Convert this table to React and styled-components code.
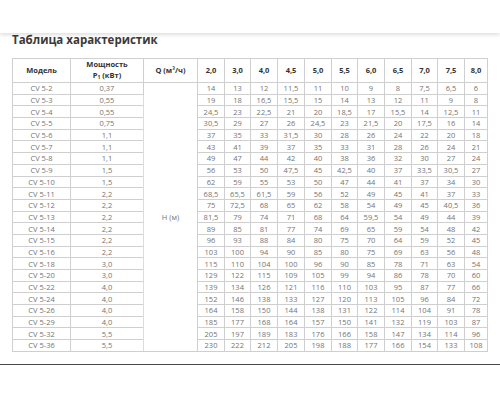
import React from "react";
import styled, { createGlobalStyle } from "styled-components";

const Global = createGlobalStyle`
  html, body { margin: 0; padding: 0; background: #fff; }
  body { font-family: "Open Sans", "Liberation Sans", sans-serif; }
`;

const Page = styled.div`
  width: 500px;
  height: 400px;
  overflow: hidden;
  background: #fff;
  display: flex;
  flex-direction: column;
`;

const TopBar = styled.header`
  height: 33px;
  flex: none;
  background: #fff;
  box-shadow: 0 2px 4px rgba(0, 0, 0, 0.13);
  position: relative;
  z-index: 1;
`;

const Content = styled.main`
  padding: 0 12px;
  flex: none;
`;

const Title = styled.h2`
  margin: 0;
  font-size: 11.5px;
  line-height: 14px;
  font-weight: 700;
  color: #3a3a3a;
`;

const Table = styled.table`
  margin-top: 11px;
  border-collapse: collapse;
  table-layout: fixed;
  width: 475px;
  font-size: 7.5px;
  color: #747474;
`;

const HeadCell = styled.th`
  border: 1px solid #cfcfcf;
  height: 22px;
  padding: 0;
  font-weight: 700;
  color: #333;
  line-height: 10.5px;
  text-align: center;
  vertical-align: middle;
`;

const Sub = styled.sub`
  font-size: 5px;
  vertical-align: -1px;
`;

const Row = styled.tr`
  height: 11.7px;
`;

const Cell = styled.td`
  border: 1px solid #cfcfcf;
  padding: 0;
  line-height: 10px;
  text-align: center;
  vertical-align: middle;
  white-space: nowrap;
`;

const SpanCell = styled(Cell)`
  border-left-color: #dcdcdc;
`;

const Footer = styled.footer`
  margin-top: 12px;
  border-top: 1.5px solid #4a4a4a;
  flex: none;
`;

const flows = ["2,0", "3,0", "4,0", "4,5", "5,0", "5,5", "6,0", "6,5", "7,0", "7,5", "8,0"];
const flowWidths = [27, 26, 27, 27, 27, 26, 27, 27, 26, 27, 23];

const rows = [
  ["CV 5-2", "0,37", "14 13 12 11,5 11 10 9 8 7,5 6,5 6"],
  ["CV 5-3", "0,55", "19 18 16,5 15,5 15 14 13 12 11 9 8"],
  ["CV 5-4", "0,55", "24,5 23 22,5 21 20 18,5 17 15,5 14 12,5 11"],
  ["CV 5-5", "0,75", "30,5 29 27 26 24,5 23 21,5 20 17,5 16 14"],
  ["CV 5-6", "1,1", "37 35 33 31,5 30 28 26 24 22 20 18"],
  ["CV 5-7", "1,1", "43 41 39 37 35 33 31 28 26 24 21"],
  ["CV 5-8", "1,1", "49 47 44 42 40 38 36 32 30 27 24"],
  ["CV 5-9", "1,5", "56 53 50 47,5 45 42,5 40 37 33,5 30,5 27"],
  ["CV 5-10", "1,5", "62 59 55 53 50 47 44 41 37 34 30"],
  ["CV 5-11", "2,2", "68,5 65,5 61,5 59 56 52 49 45 41 37 33"],
  ["CV 5-12", "2,2", "75 72,5 68 65 62 58 54 49 45 40,5 36"],
  ["CV 5-13", "2,2", "81,5 79 74 71 68 64 59,5 54 49 44 39"],
  ["CV 5-14", "2,2", "89 85 81 77 74 69 65 59 54 48 42"],
  ["CV 5-15", "2,2", "96 93 88 84 80 75 70 64 59 52 45"],
  ["CV 5-16", "2,2", "103 100 94 90 85 80 75 69 63 56 48"],
  ["CV 5-18", "3,0", "115 110 104 100 96 90 85 78 71 63 54"],
  ["CV 5-20", "3,0", "129 122 115 109 105 99 94 86 78 70 60"],
  ["CV 5-22", "4,0", "139 134 126 121 116 110 103 95 87 77 66"],
  ["CV 5-24", "4,0", "152 146 138 133 127 120 113 105 96 84 72"],
  ["CV 5-26", "4,0", "164 158 150 144 138 131 122 114 104 91 78"],
  ["CV 5-29", "4,0", "185 177 168 164 157 150 141 132 119 103 87"],
  ["CV 5-32", "5,5", "205 197 189 183 176 166 158 147 134 114 96"],
  ["CV 5-36", "5,5", "230 222 212 205 198 188 177 166 154 133 108"],
];

export default function App() {
  return (
    <Page>
      <Global />
      <TopBar />
      <Content>
        <Title>Таблица характеристик</Title>
        <Table>
          <colgroup>
            <col style={{ width: 58 }} />
            <col style={{ width: 73 }} />
            <col style={{ width: 54 }} />
            {flowWidths.map((w, i) => (
              <col key={i} style={{ width: w }} />
            ))}
          </colgroup>
          <thead>
            <tr>
              <HeadCell>Модель</HeadCell>
              <HeadCell>
                Мощность
                <br />
                P<Sub>1</Sub> (кВт)
              </HeadCell>
              <HeadCell>Q (м³/ч)</HeadCell>
              {flows.map((f) => (
                <HeadCell key={f}>{f}</HeadCell>
              ))}
            </tr>
          </thead>
          <tbody>
            {rows.map(([model, power, vals], i) => (
              <Row key={model}>
                <Cell>{model}</Cell>
                <Cell>{power}</Cell>
                {i === 0 && <SpanCell rowSpan={rows.length}>H (м)</SpanCell>}
                {vals.split(" ").map((v, j) => (
                  <Cell key={j}>{v}</Cell>
                ))}
              </Row>
            ))}
          </tbody>
        </Table>
      </Content>
      <Footer />
    </Page>
  );
}
